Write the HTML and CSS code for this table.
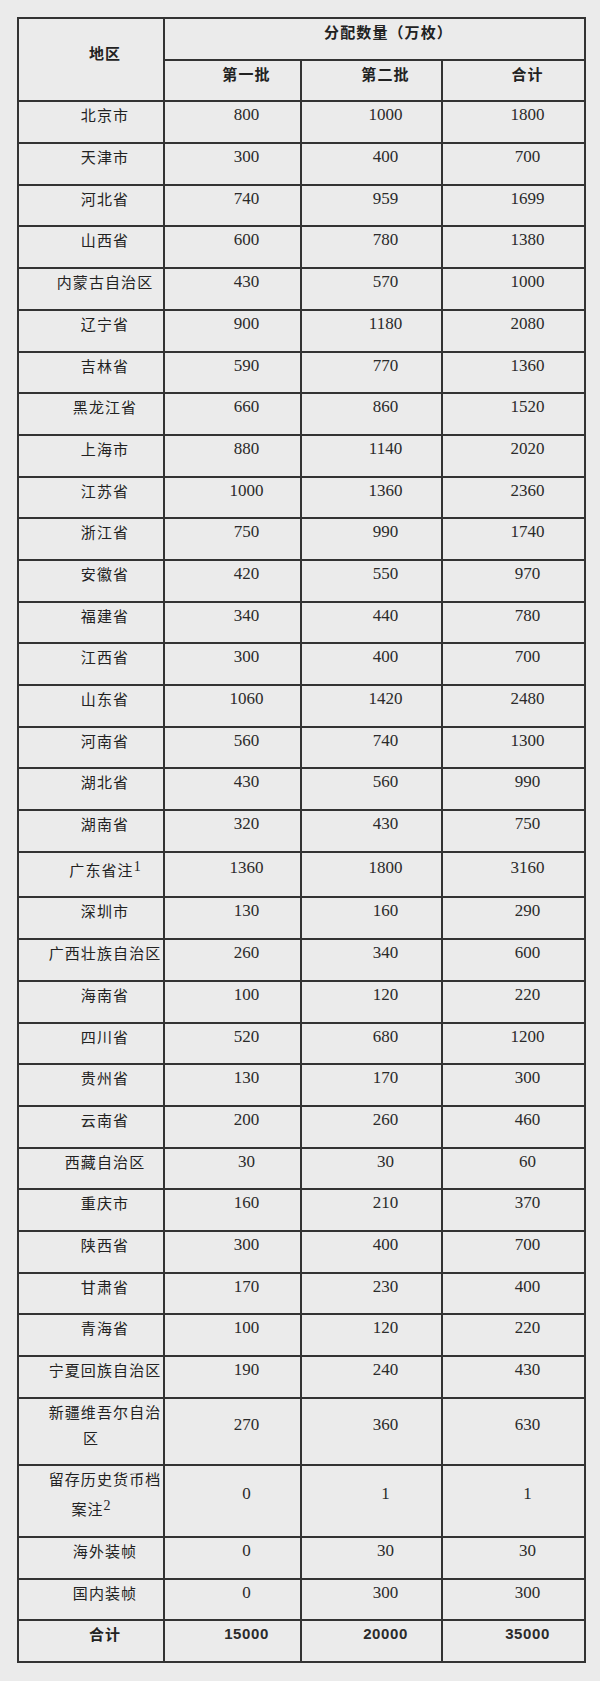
FILE: index.html
```html
<!DOCTYPE html>
<html lang="zh-CN">
<head>
<meta charset="utf-8">
<title>分配数量</title>
<link rel="stylesheet" href="styles.css">
</head>
<body>
<div class="page">
<table class="alloc">
<colgroup><col class="c1"><col class="c2"><col class="c3"><col class="c4"></colgroup>
<thead>
<tr><th rowspan="2"><div class="p">地区</div></th><th colspan="3"><div class="p">分配数量（万枚）</div></th></tr>
<tr><th><div class="p">第一批</div></th><th><div class="p">第二批</div></th><th><div class="p">合计</div></th></tr>
</thead>
<tbody>
<tr><td><div class="p">北京市</div></td><td><div class="p n">800</div></td><td><div class="p n">1000</div></td><td><div class="p n">1800</div></td></tr>
<tr><td><div class="p">天津市</div></td><td><div class="p n">300</div></td><td><div class="p n">400</div></td><td><div class="p n">700</div></td></tr>
<tr><td><div class="p">河北省</div></td><td><div class="p n">740</div></td><td><div class="p n">959</div></td><td><div class="p n">1699</div></td></tr>
<tr><td><div class="p">山西省</div></td><td><div class="p n">600</div></td><td><div class="p n">780</div></td><td><div class="p n">1380</div></td></tr>
<tr><td><div class="p">内蒙古自治区</div></td><td><div class="p n">430</div></td><td><div class="p n">570</div></td><td><div class="p n">1000</div></td></tr>
<tr><td><div class="p">辽宁省</div></td><td><div class="p n">900</div></td><td><div class="p n">1180</div></td><td><div class="p n">2080</div></td></tr>
<tr><td><div class="p">吉林省</div></td><td><div class="p n">590</div></td><td><div class="p n">770</div></td><td><div class="p n">1360</div></td></tr>
<tr><td><div class="p">黑龙江省</div></td><td><div class="p n">660</div></td><td><div class="p n">860</div></td><td><div class="p n">1520</div></td></tr>
<tr><td><div class="p">上海市</div></td><td><div class="p n">880</div></td><td><div class="p n">1140</div></td><td><div class="p n">2020</div></td></tr>
<tr><td><div class="p">江苏省</div></td><td><div class="p n">1000</div></td><td><div class="p n">1360</div></td><td><div class="p n">2360</div></td></tr>
<tr><td><div class="p">浙江省</div></td><td><div class="p n">750</div></td><td><div class="p n">990</div></td><td><div class="p n">1740</div></td></tr>
<tr><td><div class="p">安徽省</div></td><td><div class="p n">420</div></td><td><div class="p n">550</div></td><td><div class="p n">970</div></td></tr>
<tr><td><div class="p">福建省</div></td><td><div class="p n">340</div></td><td><div class="p n">440</div></td><td><div class="p n">780</div></td></tr>
<tr><td><div class="p">江西省</div></td><td><div class="p n">300</div></td><td><div class="p n">400</div></td><td><div class="p n">700</div></td></tr>
<tr><td><div class="p">山东省</div></td><td><div class="p n">1060</div></td><td><div class="p n">1420</div></td><td><div class="p n">2480</div></td></tr>
<tr><td><div class="p">河南省</div></td><td><div class="p n">560</div></td><td><div class="p n">740</div></td><td><div class="p n">1300</div></td></tr>
<tr><td><div class="p">湖北省</div></td><td><div class="p n">430</div></td><td><div class="p n">560</div></td><td><div class="p n">990</div></td></tr>
<tr><td><div class="p">湖南省</div></td><td><div class="p n">320</div></td><td><div class="p n">430</div></td><td><div class="p n">750</div></td></tr>
<tr><td><div class="p">广东省注<sup>1</sup></div></td><td><div class="p n">1360</div></td><td><div class="p n">1800</div></td><td><div class="p n">3160</div></td></tr>
<tr><td><div class="p">深圳市</div></td><td><div class="p n">130</div></td><td><div class="p n">160</div></td><td><div class="p n">290</div></td></tr>
<tr><td><div class="p">广西壮族自治区</div></td><td><div class="p n">260</div></td><td><div class="p n">340</div></td><td><div class="p n">600</div></td></tr>
<tr><td><div class="p">海南省</div></td><td><div class="p n">100</div></td><td><div class="p n">120</div></td><td><div class="p n">220</div></td></tr>
<tr><td><div class="p">四川省</div></td><td><div class="p n">520</div></td><td><div class="p n">680</div></td><td><div class="p n">1200</div></td></tr>
<tr><td><div class="p">贵州省</div></td><td><div class="p n">130</div></td><td><div class="p n">170</div></td><td><div class="p n">300</div></td></tr>
<tr><td><div class="p">云南省</div></td><td><div class="p n">200</div></td><td><div class="p n">260</div></td><td><div class="p n">460</div></td></tr>
<tr><td><div class="p">西藏自治区</div></td><td><div class="p n">30</div></td><td><div class="p n">30</div></td><td><div class="p n">60</div></td></tr>
<tr><td><div class="p">重庆市</div></td><td><div class="p n">160</div></td><td><div class="p n">210</div></td><td><div class="p n">370</div></td></tr>
<tr><td><div class="p">陕西省</div></td><td><div class="p n">300</div></td><td><div class="p n">400</div></td><td><div class="p n">700</div></td></tr>
<tr><td><div class="p">甘肃省</div></td><td><div class="p n">170</div></td><td><div class="p n">230</div></td><td><div class="p n">400</div></td></tr>
<tr><td><div class="p">青海省</div></td><td><div class="p n">100</div></td><td><div class="p n">120</div></td><td><div class="p n">220</div></td></tr>
<tr><td><div class="p">宁夏回族自治区</div></td><td><div class="p n">190</div></td><td><div class="p n">240</div></td><td><div class="p n">430</div></td></tr>
<tr><td><div class="p">新疆维吾尔自治区</div></td><td><div class="p n">270</div></td><td><div class="p n">360</div></td><td><div class="p n">630</div></td></tr>
<tr><td><div class="p">留存历史货币档案注<sup>2</sup></div></td><td><div class="p n">0</div></td><td><div class="p n">1</div></td><td><div class="p n">1</div></td></tr>
<tr><td><div class="p">海外装帧</div></td><td><div class="p n">0</div></td><td><div class="p n">30</div></td><td><div class="p n">30</div></td></tr>
<tr><td><div class="p">国内装帧</div></td><td><div class="p n">0</div></td><td><div class="p n">300</div></td><td><div class="p n">300</div></td></tr>
<tr class="total"><td><div class="p">合计</div></td><td><div class="p n">15000</div></td><td><div class="p n">20000</div></td><td><div class="p n">35000</div></td></tr>
</tbody>
</table>
</div>
</body>
</html>
```

FILE: styles.css
```css
html, body {
  margin: 0;
  padding: 0;
  background: #ebebeb;
}
.page {
  padding: 17px 0 0 17px;
}
.alloc {
  border-collapse: collapse;
  table-layout: fixed;
  width: 567px;
  font-family: "Noto Sans CJK SC", "Liberation Serif", sans-serif;
  font-size: 15px;
  color: #222;
}
.c1 { width: 146px; }
.c2 { width: 137px; }
.c3 { width: 141px; }
.c4 { width: 143px; }
.alloc th,
.alloc td {
  border: 2px solid #333;
  padding: 0;
  vertical-align: middle;
  text-align: center;
  font-weight: normal;
}
.alloc th {
  font-weight: bold;
}
.p {
  line-height: 26px;
  margin: 0 0 13.7px;
  text-indent: 28px;
  letter-spacing: 1.1px;
  text-align: center;
}
.n {
  font-family: "Liberation Serif", serif;
  font-size: 17px;
  letter-spacing: 0;
  color: #2a2a2a;
}
.total .p {
  font-weight: bold;
}
.total .n {
  font-family: "Liberation Sans", sans-serif;
  font-size: 15px;
  letter-spacing: 0.6px;
}
sup {
  display: inline-block;
  font-family: "Liberation Serif", serif;
  font-size: 14px;
  line-height: 28px;
  vertical-align: 5px;
  letter-spacing: 0;
  text-indent: 0;
}
```
